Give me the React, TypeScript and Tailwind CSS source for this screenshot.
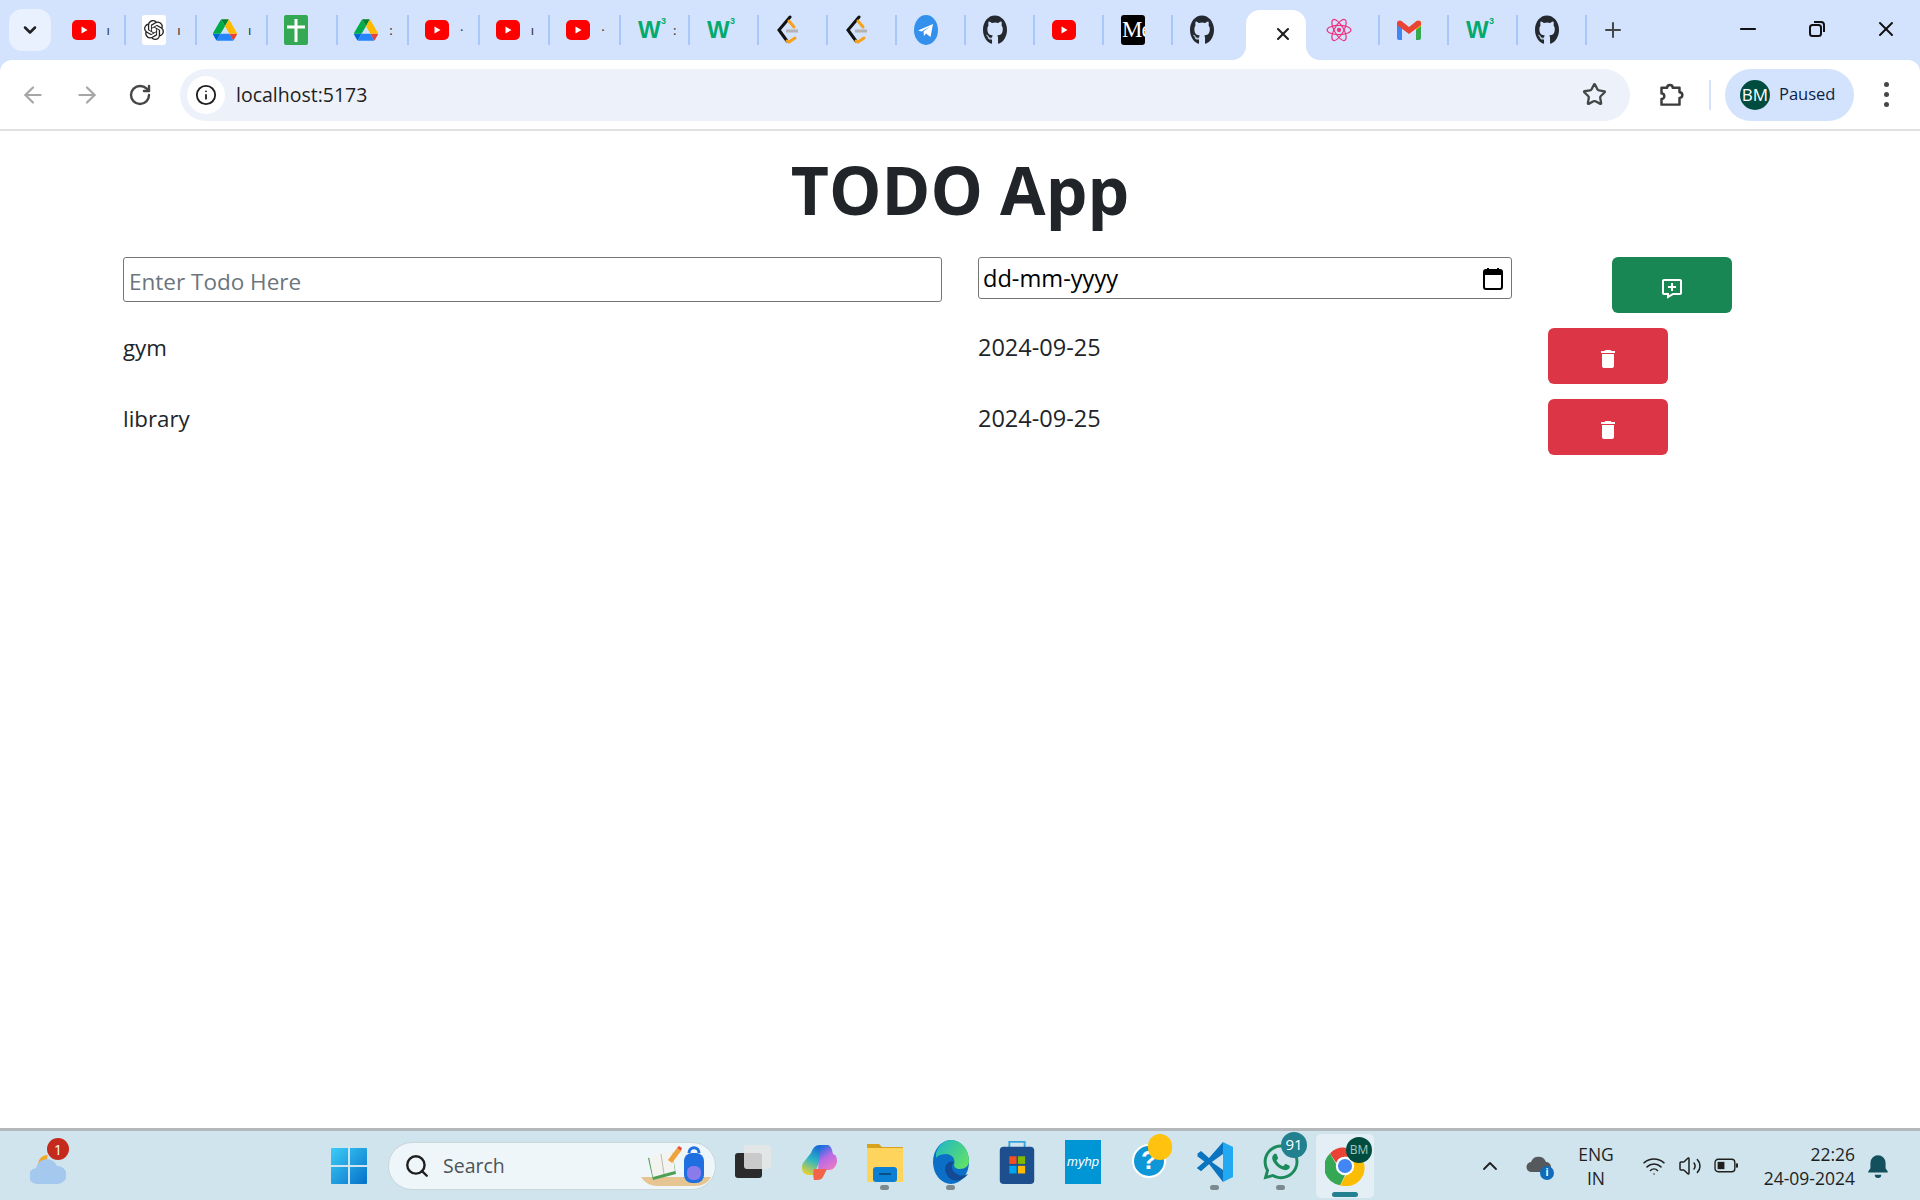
import type { ReactNode } from "react";
import {
  ArrowLeft,
  ArrowRight,
  ChevronDown,
  ChevronUp,
  Info,
  Minus,
  Plus,
  RotateCw,
  Search,
  Star,
  Volume2,
  Wifi,
  X,
} from "lucide-react";
import { BiMessageAdd } from "react-icons/bi";
import { FaGithub, FaWhatsapp } from "react-icons/fa";
import { MdDelete } from "react-icons/md";
import { SiOpenai } from "react-icons/si";

const font = "font-['Open_Sans','Noto_Sans',sans-serif]";

function YouTube() {
  return (
    <svg viewBox="0 0 24 24" className="h-6 w-6">
      <rect x="0" y="2" width="24" height="20" rx="5" fill="#ff0000" />
      <path d="M9.500 8.500v7l6-3.500z" fill="#fff" />
    </svg>
  );
}

function OpenAi() {
  return (
    <div className="flex h-[30px] w-6 items-center justify-center rounded-[3px] bg-white">
      <SiOpenai className="h-5 w-5 text-[#222]" />
    </div>
  );
}

function Drive() {
  return (
    <svg viewBox="0 0 87.3 78" className="h-6 w-6">
      <path d="m6.6 66.85 3.85 6.65c.8 1.4 1.95 2.5 3.3 3.3l13.75-23.8h-27.5c0 1.55.4 3.1 1.2 4.5z" fill="#0066da" />
      <path d="m43.65 25-13.75-23.8c-1.35.8-2.5 1.9-3.3 3.3l-25.4 44a9.06 9.06 0 0 0 -1.2 4.5h27.5z" fill="#00ac47" />
      <path d="m73.55 76.8c1.35-.8 2.5-1.9 3.3-3.3l1.6-2.75 7.65-13.25c.8-1.4 1.2-2.95 1.2-4.5h-27.502l5.852 11.5z" fill="#ea4335" />
      <path d="m43.65 25 13.75-23.8c-1.35-.8-2.9-1.2-4.5-1.2h-18.5c-1.6 0-3.15.45-4.5 1.2z" fill="#00832d" />
      <path d="m59.8 53h-32.3l-13.75 23.8c1.35.8 2.9 1.2 4.5 1.2h50.8c1.6 0 3.15-.45 4.5-1.2z" fill="#2684fc" />
      <path d="m73.4 26.5-12.7-22c-.8-1.4-1.95-2.5-3.3-3.3l-13.75 23.8 16.15 28h27.45c0-1.55-.4-3.1-1.2-4.5z" fill="#ffba00" />
    </svg>
  );
}

function Sheet() {
  return (
    <svg viewBox="0 0 24 30" className="h-[30px] w-6">
      <rect width="24" height="30" rx="2" fill="#34a853" />
      <path d="M3 12h18M12 4v23" stroke="#fff" strokeWidth="3" />
    </svg>
  );
}

function W3() {
  return (
    <div className="relative h-6 w-6 font-['Liberation_Sans',sans-serif] font-bold text-[#04aa6d]">
      <span className="absolute left-0 top-[-1px] text-[24px] leading-[26px]">W</span>
      <span className="absolute right-[-4px] top-[-2px] text-[9px] leading-[10px]">3</span>
    </div>
  );
}

function Leet() {
  return (
    <svg viewBox="0 0 24 30" className="h-[30px] w-6">
      <path d="M14 2 3 15l8 11" fill="none" stroke="#111" strokeWidth="3" strokeLinecap="round" />
      <path d="m13 6 5 6M11 26l2 1 6-4" fill="none" stroke="#f6a21c" strokeWidth="3" strokeLinecap="round" />
      <path d="M10 16h12" stroke="#b3b3b3" strokeWidth="3" />
    </svg>
  );
}

function Telegram() {
  return (
    <svg viewBox="0 0 24 30" className="h-[30px] w-6">
      <ellipse cx="12" cy="15" rx="12" ry="15" fill="#3390ec" />
      <path d="M4 15.500 19 9l-2.500 13-4.500-3.500-2 2.500-.5-4.500L16 11.500l-8.500 5z" fill="#fff" />
    </svg>
  );
}

function GitHub() {
  return <FaGithub className="h-[30px] w-6 text-[#24292f]" preserveAspectRatio="none" />;
}

function Medium() {
  return (
    <div className="flex h-[30px] w-6 items-center overflow-hidden rounded-[3px] bg-black font-['Liberation_Serif',serif] text-[23px] text-white">
      <span className="pl-[1px] tracking-[-1px]">Me</span>
    </div>
  );
}

function ReactAtom() {
  return (
    <svg viewBox="-12 -12 24 24" className="h-[26px] w-[26px]" fill="none" stroke="#f0307e" strokeWidth="1.100">
      <ellipse rx="11" ry="4.200" />
      <ellipse rx="11" ry="4.200" transform="rotate(60)" />
      <ellipse rx="11" ry="4.200" transform="rotate(120)" />
      <circle r="2" fill="#f0307e" stroke="none" />
    </svg>
  );
}

function Gmail() {
  return (
    <svg viewBox="0 0 24 20" className="h-[20px] w-6">
      <path d="M0 3v15a2 2 0 0 0 2 2h3V8z" fill="#4285f4" />
      <path d="M24 3v15a2 2 0 0 1-2 2h-3V8z" fill="#34a853" />
      <path d="M19 1.500 24 1v5l-5 4z" fill="#fbbc04" />
      <path d="M0 5V3C0 1 2.500-.5 4.500 1L12 7l7.500-6C21.500-.5 24 1 24 3v2l-12 9z" fill="#ea4335" />
    </svg>
  );
}

type TabProps = {
  icon: ReactNode;
  width: string;
  mark?: string;
  separator?: boolean;
};

function Tab({ icon, width, mark, separator = true }: TabProps) {
  const inset = width === "w-[70.700px]" ? "ml-[16px]" : "ml-[17px]";
  return (
    <div className={`flex h-[60px] items-center ${width}`}>
      <div className={`${inset} flex h-[30px] w-6 flex-none items-center justify-center`}>{icon}</div>
      <span className="ml-[11px] flex-1 text-[13px] leading-none text-[#333]">{mark}</span>
      {separator ? <div className="h-[30px] w-[2px] flex-none bg-[#a8c7fa]" /> : null}
    </div>
  );
}

function Browser() {
  const wide = "w-[70.700px]";
  const tight = "w-[69px]";
  return (
    <header className="flex-none bg-[#d3e3fd]">
      <div className="flex h-[60px]">
        <div className="ml-[9px] mt-[9px] flex h-[42px] w-[42px] items-center justify-center rounded-[13px] bg-[#e9f0fe]">
          <ChevronDown className="h-5 w-5 text-[#1f1f1f]" strokeWidth={3} />
        </div>
        <div className="ml-[4.500px] flex">
          <Tab width={wide} icon={<YouTube />} mark="ı" />
          <Tab width={wide} icon={<OpenAi />} mark="ı" />
          <Tab width={wide} icon={<Drive />} mark="ı" />
          <Tab width={wide} icon={<Sheet />} />
          <Tab width={wide} icon={<Drive />} mark=":" />
          <Tab width={wide} icon={<YouTube />} mark="·" />
          <Tab width={wide} icon={<YouTube />} mark="ı" />
          <Tab width={wide} icon={<YouTube />} mark="·" />
          <Tab width={tight} icon={<W3 />} mark=":" />
          <Tab width={tight} icon={<W3 />} />
          <Tab width={tight} icon={<Leet />} />
          <Tab width={tight} icon={<Leet />} />
          <Tab width={tight} icon={<Telegram />} />
          <Tab width={tight} icon={<GitHub />} />
          <Tab width={tight} icon={<YouTube />} />
          <Tab width={tight} icon={<Medium />} />
          <Tab width={tight} icon={<GitHub />} separator={false} />
        </div>
        <div className="relative ml-[4px] mt-[10px] flex h-[50px] w-[60px] items-center justify-center rounded-t-[14px] bg-white pb-[2px] pl-[14px]">
          <X className="h-5 w-5 text-[#1f1f1f]" strokeWidth={2.500} />
          <div className="absolute bottom-0 left-[-14px] h-[14px] w-[14px] bg-white">
            <div className="h-full w-full rounded-br-[14px] bg-[#d3e3fd]" />
          </div>
          <div className="absolute bottom-0 right-[-14px] h-[14px] w-[14px] bg-white">
            <div className="h-full w-full rounded-bl-[14px] bg-[#d3e3fd]" />
          </div>
        </div>
        <div className="ml-[2px] flex">
          <Tab width="w-[72px]" icon={<div className="ml-[4px]"><ReactAtom /></div>} />
          <Tab width={tight} icon={<Gmail />} />
          <Tab width={tight} icon={<W3 />} />
          <Tab width={tight} icon={<GitHub />} />
        </div>
        <Plus className="ml-[14px] mt-[18px] h-6 w-6 text-[#444746]" strokeWidth={2} />
        <div className="ml-auto flex h-[60px] items-center pb-[2px]">
          <Minus className="mr-[47px] h-6 w-6 text-[#111]" strokeWidth={2.200} />
          <svg viewBox="0 0 20 20" className="mr-[47px] h-5 w-5" fill="none" stroke="#111" strokeWidth="2">
            <rect x="3" y="6" width="11" height="11" rx="2.500" />
            <path d="M7 3h7a3 3 0 0 1 3 3v7" />
          </svg>
          <X className="mr-[22px] h-[24px] w-[24px] text-[#111]" strokeWidth={2} />
        </div>
      </div>
      <div className="flex h-[71px] items-center rounded-t-[12px] border-b-2 border-[#e1e1e1] bg-white">
        <ArrowLeft className="ml-[20px] h-[26px] w-[26px] text-[#a6a6a6]" strokeWidth={2} />
        <ArrowRight className="ml-[28px] h-[26px] w-[26px] text-[#a6a6a6]" strokeWidth={2} />
        <RotateCw className="ml-[28px] h-[24px] w-[24px] text-[#444746]" strokeWidth={2.400} />
        <div className="ml-[28px] flex h-[52px] w-[1450px] items-center rounded-full bg-[#ecf1fa] pl-[7px]">
          <div className="flex h-[38px] w-[38px] items-center justify-center rounded-full bg-white">
            <Info className="h-[22px] w-[22px] text-[#1f1f1f]" strokeWidth={2} />
          </div>
          <span className={`ml-[11px] text-[19.500px] text-[#1f1f1f] ${font}`}>localhost:5173</span>
          <Star className="ml-auto mr-[23px] h-[25px] w-[25px] text-[#444746]" strokeWidth={2.200} />
        </div>
        <svg viewBox="0 0 24 24" className="ml-[27px] h-[27px] w-[27px]" fill="none" stroke="#3c3c3c" strokeWidth="2.200">
          <path d="M4 6h5a2.500 2.500 0 0 1 5 0h6v4a2.500 2.500 0 0 1 0 5v6H4v-5a2.500 2.500 0 0 0 0-5z" strokeLinejoin="round" />
        </svg>
        <div className="ml-[25px] h-[30px] w-[2px] bg-[#d3e3fd]" />
        <div className="ml-[14px] flex h-[52px] w-[129px] items-center rounded-full bg-[#d3e3fd] pl-[15px]">
          <div className={`flex h-[30px] w-[30px] items-center justify-center rounded-full bg-[#004d3f] text-[17px] text-white ${font}`}>BM</div>
          <span className={`ml-[9px] text-[16.500px] text-[#0b1f45] ${font}`}>Paused</span>
        </div>
        <div className="ml-[30px] flex flex-col gap-[5px]">
          <div className="h-[5px] w-[5px] rounded-full bg-[#444746]" />
          <div className="h-[5px] w-[5px] rounded-full bg-[#444746]" />
          <div className="h-[5px] w-[5px] rounded-full bg-[#444746]" />
        </div>
      </div>
    </header>
  );
}

const todos = [
  { name: "gym", date: "2024-09-25" },
  { name: "library", date: "2024-09-25" },
];

function Todo() {
  return (
    <main className={`flex-1 bg-white pl-[123px] text-[#212529] ${font}`}>
      <h1 className="mr-[123px] mt-[15px] h-[86px] text-center text-[66px] font-bold leading-[86px]">TODO App</h1>
      <div className="mt-[25px] grid grid-cols-[819px_534px_auto] gap-x-[36px] gap-y-[15px]">
        <input
          className="h-[45px] rounded-[3px] border border-[#767676] px-[5px] pt-[3px] text-[22.500px] outline-none placeholder:text-[#6c757d]"
          placeholder="Enter Todo Here"
        />
        <div className="flex h-[42px] items-center justify-between rounded-[3px] border border-[#767676] pl-[4px] pr-[8px] pt-[1px] text-[23.600px] text-black">
          <span>dd-mm-yyyy</span>
          <svg viewBox="0 0 20 22" className="h-[22px] w-[20px]">
            <path d="M5 0v3M15 0v3" stroke="#000" strokeWidth="2" />
            <rect x="1" y="2" width="18" height="19" rx="2" fill="none" stroke="#000" strokeWidth="2" />
            <rect x="1" y="2" width="18" height="5" fill="#000" />
          </svg>
        </div>
        <button className="ml-[64px] flex h-[56px] w-[120px] items-center justify-center rounded-[6px] bg-[#198754] pt-[7px] text-white">
          <BiMessageAdd className="h-6 w-6" />
        </button>
        {todos.map((todo) => (
          <div key={todo.name} className="contents">
            <div className="text-[22.300px] leading-[40px]">{todo.name}</div>
            <div className="text-[23.500px] leading-[38px]">{todo.date}</div>
            <button className="flex h-[56px] w-[120px] items-center justify-center rounded-[6px] bg-[#dc3545] pt-[6px] text-white">
              <MdDelete className="h-6 w-6" />
            </button>
          </div>
        ))}
      </div>
    </main>
  );
}

function TaskSlot({ children, dot }: { children: ReactNode; dot?: boolean }) {
  return (
    <div className="relative flex h-[56px] w-[66px] items-center justify-center">
      {children}
      {dot ? <div className="absolute bottom-[0px] left-[28px] h-[5px] w-[9px] rounded-full bg-[#7c8a90]" /> : null}
    </div>
  );
}

function WindowsLogo() {
  return (
    <svg viewBox="0 0 36 36" className="h-9 w-9">
      <defs>
        <linearGradient id="win" x1="0" y1="0" x2="1" y2="1">
          <stop offset="0" stopColor="#3ccdf7" />
          <stop offset="1" stopColor="#0670c9" />
        </linearGradient>
      </defs>
      <path d="M0 1a1 1 0 0 1 1-1h16v17H0zM19 0h16a1 1 0 0 1 1 1v16H19zM0 19h17v17H1a1 1 0 0 1-1-1zM19 19h17v16a1 1 0 0 1-1 1H19z" fill="url(#win)" />
    </svg>
  );
}

function SearchArt() {
  return (
    <svg viewBox="0 0 72 44" className="h-[44px] w-[72px]">
      <path d="M0 33h70c-3 6-9 9-16 9H16C9 42 3 38 0 33z" fill="#e6c592" />
      <path d="M7 14 31 8l4 22-23 6z" fill="#4f9e58" />
      <path d="M8 13 31 7l3 20-22 6z" fill="#f3f4ef" />
      <path d="M20 10l3 20" stroke="#b9bdb3" strokeWidth="1" />
      <path d="m27 16 9-12 4 3-9 12z" fill="#f0a33b" />
      <path d="m36 4 2-2 3 2-1 3z" fill="#e8503a" />
      <rect x="43" y="9" width="20" height="30" rx="8" fill="#1f6fe0" />
      <rect x="46" y="22" width="14" height="14" rx="6" fill="#8a7bea" />
      <path d="M48 9c0-7 10-7 10 0" fill="none" stroke="#1f6fe0" strokeWidth="3" />
    </svg>
  );
}

function Copilot() {
  return (
    <svg viewBox="0 0 36 36" className="h-[36px] w-[36px]">
      <defs>
        <linearGradient id="cpA" x1="0.600" y1="0" x2="0.200" y2="1">
          <stop offset="0" stopColor="#1766d6" />
          <stop offset="0.500" stopColor="#2fb7c4" />
          <stop offset="1" stopColor="#f1d32c" />
        </linearGradient>
        <linearGradient id="cpB" x1="0.300" y1="0" x2="0.800" y2="1">
          <stop offset="0" stopColor="#1a6fe0" />
          <stop offset="0.450" stopColor="#b76ae6" />
          <stop offset="1" stopColor="#f07ac0" />
        </linearGradient>
      </defs>
      <path d="M26 1H19c-5 0-7 3-9 8L2 19c-3 6 0 12 6 12h5l5-12z" fill="url(#cpA)" />
      <path d="M19 1h7c3 0 4 2 5 5l1 4c3 1 4 3 4 7s-3 9-8 9H17z" fill="url(#cpB)" />
      <path d="M13 25h13l-4 8c-1 2-3 3-6 3h-3c-1-4-1-8 0-11z" fill="#f2644a" />
    </svg>
  );
}

function Folder() {
  return (
    <svg viewBox="0 0 36 40" className="h-[40px] w-[36px]">
      <path d="M0 2h12l3 3h21v35H0z" fill="#d9a21c" />
      <rect y="6" width="36" height="34" fill="#ffd45c" />
      <rect x="6" y="25" width="24" height="15" rx="3" fill="#0b7fd4" />
      <rect x="12" y="31" width="12" height="2" fill="#0b4f87" />
    </svg>
  );
}

function Edge() {
  return (
    <svg viewBox="0 0 36 44" className="h-[44px] w-[36px]">
      <defs>
        <linearGradient id="edgeA" x1="0" y1="0" x2="1" y2="0.700">
          <stop offset="0" stopColor="#1cb5c9" />
          <stop offset="1" stopColor="#5fe06a" />
        </linearGradient>
      </defs>
      <ellipse cx="18" cy="22" rx="18" ry="22" fill="#0c6fc7" />
      <path d="M3 13C6 4 12 0 18 0c10 0 18 9 18 21 0 5-4 8-9 8-4 0-6-2-6-4 2-6-2-11-8-11-4 0-8 1-10 4z" fill="url(#edgeA)" />
      <path d="M21 22c-6-2-11 4-8 11 2 5 7 9 14 7 3-1 6-3 8-6-4 2-8 2-11 0-5-3-7-8-3-12z" fill="#124a96" />
    </svg>
  );
}

function Store() {
  return (
    <svg viewBox="0 0 36 46" className="h-[44px] w-[36px]">
      <path d="M10 8V2h16v6" fill="none" stroke="#37a5dc" strokeWidth="2" />
      <rect y="7" width="36" height="39" rx="4" fill="#1d4f8f" />
      <rect x="10" y="17" width="7.500" height="8" fill="#f25022" />
      <rect x="19" y="17" width="7.500" height="8" fill="#7fba00" />
      <rect x="10" y="27" width="7.500" height="8" fill="#00a4ef" />
      <rect x="19" y="27" width="7.500" height="8" fill="#ffb900" />
    </svg>
  );
}

function Help() {
  return (
    <div className="relative h-[36px] w-[34px]">
      <div className="flex h-[34px] w-[34px] items-center justify-center rounded-full border-2 border-white bg-[#0f96d6] font-['Liberation_Sans',sans-serif] text-[26px] font-bold text-white">?</div>
      <div className="absolute left-[16px] top-[-10px] h-[26px] w-[24px] rounded-full bg-[#ffc20e]" />
    </div>
  );
}

function VsCode() {
  return (
    <svg viewBox="0 0 36 40" className="h-[40px] w-[36px]">
      <path d="M26 0 36 5v30l-10 5z" fill="#23a9f2" />
      <path d="M26 0v12L12 22 4 29l-4-3 8-7-8-7 4-3 8 7z" fill="#0a74c0" />
      <path d="M26 40V28L12 18 4 11l-4 3 8 6-8 6 4 3 8-7z" fill="#0a74c0" />
    </svg>
  );
}

function Chrome() {
  return (
    <svg viewBox="0 0 48 48" className="h-[40px] w-[40px]">
      <path d="M24 2a22 22 0 0 1 19 11H24a11 11 0 0 0-10.500 7.500L6 9A22 22 0 0 1 24 2z" fill="#ea4335" />
      <path d="M6 9l9.500 16.500A10 10 0 0 0 24 35l-6 12A22 22 0 0 1 6 9z" fill="#34a853" />
      <path d="M43 13a22 22 0 0 1-25 34l9-15.500A10 10 0 0 0 33 18l-2-5z" fill="#fbbc04" />
      <circle cx="24" cy="24" r="11" fill="#fff" />
      <circle cx="24" cy="24" r="8.500" fill="#4285f4" />
    </svg>
  );
}

function Taskbar() {
  return (
    <footer className={`flex h-[72px] flex-none items-center border-t-[3px] border-[#b4b8ba] bg-[#cfe4ec] ${font}`}>
      <div className="relative flex h-full w-[316px] items-center pl-[30px]">
        <svg viewBox="0 0 36 40" className="h-[40px] w-[36px]">
          <path d="M8 18C9 12 13 9 18 9c-2 4 0 8 4 9z" fill="#f5a623" />
          <path d="M8 38a8 8 0 0 1-2-16 11 11 0 0 1 21-2 9 9 0 0 1 1 18z" fill="#a5c8ee" />
        </svg>
        <div className="absolute left-[47px] top-[7px] flex h-[22px] w-[22px] items-center justify-center rounded-full bg-[#c42b1c] text-[14px] text-white">1</div>
      </div>
      <TaskSlot><WindowsLogo /></TaskSlot>
      <div className="ml-[6px] flex h-[48px] w-[328px] items-center rounded-full border border-[#c9d6dc] bg-[#eff6f9] pl-[15px] pr-[2px]">
        <Search className="h-[26px] w-[26px] text-[#1f1f1f]" strokeWidth={2.200} />
        <span className="ml-[13px] text-[19.500px] text-[#4d5357]">Search</span>
        <div className="ml-auto"><SearchArt /></div>
      </div>
      <div className="ml-[4px] flex">
        <TaskSlot>
          <div className="relative h-[33px] w-[36px]">
            <div className="absolute bottom-0 left-0 h-[25px] w-[27px] rounded-[3px] bg-[#2b2b2b]" />
            <div className="absolute right-0 top-0 h-[24px] w-[27px] rounded-[3px] bg-[#e6e6e6]/85" />
          </div>
        </TaskSlot>
        <TaskSlot><Copilot /></TaskSlot>
        <TaskSlot dot><Folder /></TaskSlot>
        <TaskSlot dot><Edge /></TaskSlot>
        <TaskSlot><Store /></TaskSlot>
        <TaskSlot>
          <div className="flex h-[44px] w-[36px] items-center justify-center bg-[#0096d6] font-['Liberation_Sans',sans-serif] text-[13px] italic text-white">myhp</div>
        </TaskSlot>
        <TaskSlot><Help /></TaskSlot>
        <TaskSlot dot><VsCode /></TaskSlot>
        <TaskSlot dot>
          <div className="relative">
            <FaWhatsapp className="h-[40px] w-[40px] text-[#1c8a5c]" />
            <div className="absolute left-[20px] top-[-10px] flex h-[26px] w-[26px] items-center justify-center rounded-full bg-[#22808f] text-[15px] text-white">91</div>
          </div>
        </TaskSlot>
        <div className="relative ml-[2px] flex h-[64px] w-[58px] items-center justify-center rounded-[5px] bg-[#e3eff4]">
          <Chrome />
          <div className="absolute right-[2px] top-[3px] flex h-[26px] w-[26px] items-center justify-center rounded-full bg-[#004d3f] text-[12px] text-[#a8c8c0]">BM</div>
          <div className="absolute bottom-[1px] left-[16px] h-[5px] w-[26px] rounded-full bg-[#22808f]" />
        </div>
      </div>
      <ChevronUp className="ml-[104px] h-[24px] w-[24px] text-[#1f1f1f]" strokeWidth={1.800} />
      <div className="relative ml-[24px] h-[24px] w-[26px]">
        <svg viewBox="0 0 26 20" className="h-[20px] w-[26px]">
          <path d="M6 18a5 5 0 0 1-1-10 8 8 0 0 1 15 0 5 5 0 0 1 0 10z" fill="#55595c" />
        </svg>
        <div className="absolute bottom-[-2px] right-[-2px] flex h-[14px] w-[14px] items-center justify-center rounded-full bg-[#0f6cbd] text-[10px] font-bold text-white">i</div>
      </div>
      <div className="ml-[19px] w-[50px] text-center text-[17.500px] leading-[24px] text-[#1f1f1f]">
        <div>ENG</div>
        <div>IN</div>
      </div>
      <Wifi className="ml-[21px] h-[24px] w-[24px] text-[#1f1f1f]" strokeWidth={1.500} />
      <Volume2 className="ml-[12px] h-[24px] w-[24px] text-[#1f1f1f]" strokeWidth={1.500} />
      <svg viewBox="0 0 24 14" className="ml-[12px] h-[15px] w-[25px]" fill="none">
        <rect x="1" y="1" width="19" height="12" rx="3" stroke="#1f1f1f" strokeWidth="1.300" />
        <rect x="3.500" y="3.500" width="6.500" height="7" fill="#1f1f1f" />
        <rect x="21" y="5" width="2" height="4" fill="#1f1f1f" />
      </svg>
      <div className="ml-[10px] w-[106px] whitespace-nowrap text-right text-[17.500px] leading-[24px] text-[#1f1f1f]">
        <div>22:26</div>
        <div>24-09-2024</div>
      </div>
      <svg viewBox="0 0 24 24" className="ml-[10px] h-[26px] w-[26px]" fill="#134f5c">
        <path d="M12 2a7 7 0 0 0-7 7v5l-2 3v1h18v-1l-2-3V9a7 7 0 0 0-7-7zM9 20a3 3 0 0 0 6 0z" />
      </svg>
    </footer>
  );
}

export default function App() {
  return (
    <div className="flex h-[1200px] w-[1920px] flex-col overflow-hidden">
      <Browser />
      <Todo />
      <Taskbar />
    </div>
  );
}
